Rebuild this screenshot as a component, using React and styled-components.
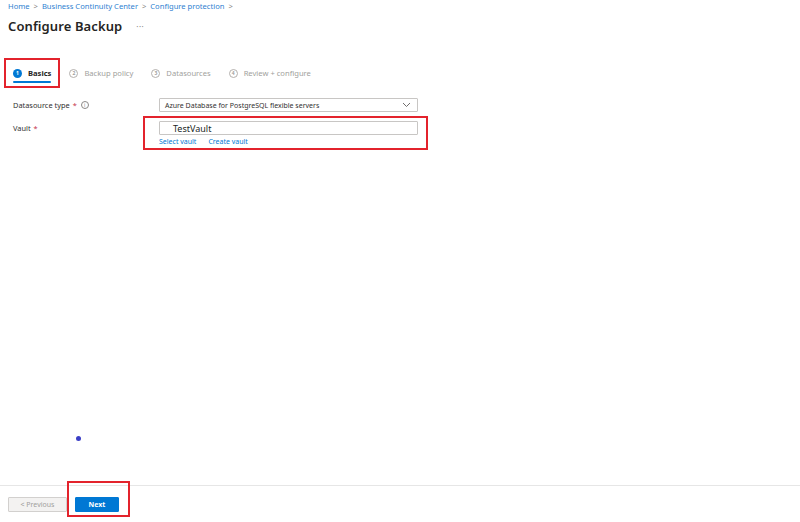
import React from "react";
import styled, { createGlobalStyle } from "styled-components";

const Global = createGlobalStyle`
  html, body { margin: 0; padding: 0; background: #ffffff; }
  body { font-family: "Noto Sans", "Open Sans", sans-serif; color: #323130; }
  * { box-sizing: border-box; }
`;

const Page = styled.div`
  width: 800px;
  height: 522px;
  display: flex;
  flex-direction: column;
  background: #fff;
`;

const Header = styled.header`
  padding: 1px 8px 0 8px;
  display: flex;
  flex-direction: column;
`;

const Breadcrumb = styled.nav`
  display: flex;
  align-items: center;
  gap: 4px;
  font-size: 7.6px;
  line-height: 11px;
  color: #2f7fd1;
`;

const Crumb = styled.span`
  color: #2f7fd1;
`;

const Sep = styled.span`
  color: #8a8886;
  font-size: 7.5px;
`;

const TitleRow = styled.div`
  display: flex;
  align-items: center;
  gap: 14px;
  margin-top: 2px;
  height: 24px;
`;

const Title = styled.h1`
  margin: 0;
  font-size: 13px;
  font-weight: 600;
  color: #252423;
  letter-spacing: 0.1px;
`;

const More = styled.span`
  font-size: 8px;
  color: #8a8886;
  letter-spacing: 0.5px;
`;

const Tabs = styled.div`
  display: flex;
  align-items: center;
  gap: 18px;
  padding: 0 0 0 13px;
  margin-top: 20px;
  height: 30px;
`;

const Tab = styled.div`
  position: relative;
  display: flex;
  align-items: center;
  gap: 6px;
  height: 30px;
  font-size: 7.6px;
  font-weight: ${(p) => (p.$active ? 700 : 400)};
  color: ${(p) => (p.$active ? "#252423" : "#a19f9d")};

  ${(p) =>
    p.$active &&
    `
    &::before {
      content: "";
      position: absolute;
      left: 0;
      right: 0;
      bottom: 5px;
      height: 2px;
      background: #0078d4;
      border-radius: 1px;
    }
    &::after {
      content: "";
      position: absolute;
      left: -9px;
      right: -9px;
      top: 0;
      bottom: 0;
      border: 2px solid #e3232c;
    }
  `}
`;

const StepNum = styled.span`
  width: 9px;
  height: 9px;
  border-radius: 50%;
  display: inline-flex;
  align-items: center;
  justify-content: center;
  font-size: 5px;
  font-weight: 700;
  background: ${(p) => (p.$active ? "#0078d4" : "transparent")};
  color: ${(p) => (p.$active ? "#fff" : "#a19f9d")};
  border: ${(p) => (p.$active ? "none" : "0.8px solid #b3b0ad")};
`;

const Form = styled.div`
  display: grid;
  grid-template-columns: 146px 259px;
  row-gap: 9px;
  padding-left: 13px;
  margin-top: 10px;
`;

const Label = styled.div`
  display: flex;
  align-items: center;
  gap: 3px;
  font-size: 7.4px;
  color: #323130;
  height: 14px;
`;

const Req = styled.span`
  color: #c4314b;
`;

const Info = styled.span`
  width: 8px;
  height: 8px;
  border-radius: 50%;
  border: 0.8px solid #8a8886;
  color: #8a8886;
  font-size: 5px;
  display: inline-flex;
  align-items: center;
  justify-content: center;
  margin-left: 1px;
`;

const Select = styled.div`
  height: 14px;
  border: 1px solid #c8c6c4;
  border-radius: 1px;
  display: flex;
  align-items: center;
  justify-content: space-between;
  padding: 0 6px 0 5px;
  font-size: 7px;
  color: #323130;
`;

const FieldGroup = styled.div`
  position: relative;
  display: flex;
  flex-direction: column;
  gap: 2px;

  &::after {
    content: "";
    position: absolute;
    left: -16px;
    right: -10px;
    top: -5px;
    bottom: -4px;
    border: 2px solid #e3232c;
  }
`;

const Input = styled.div`
  height: 14px;
  border: 1px solid #c8c6c4;
  border-radius: 1px;
  display: flex;
  align-items: center;
  padding-left: 13px;
  font-size: 9px;
  color: #201f1e;
`;

const Links = styled.div`
  display: flex;
  gap: 12px;
  font-size: 7px;
  line-height: 9px;
`;

const Link = styled.span`
  color: #0078d4;
`;

const Body = styled.div`
  flex: 1;
  position: relative;
`;

const Dot = styled.span`
  position: absolute;
  left: 76px;
  top: 290px;
  width: 5px;
  height: 5px;
  border-radius: 50%;
  background: #3b3fc6;
`;

const Footer = styled.footer`
  height: 37px;
  border-top: 1px solid #e6e6e6;
  display: flex;
  align-items: center;
  gap: 8px;
  padding: 0 8px;
  background: #fff;
`;

const Button = styled.div`
  position: relative;
  height: 15px;
  width: ${(p) => p.$w}px;
  display: flex;
  align-items: center;
  justify-content: center;
  font-size: 7px;
  border-radius: 1px;
  font-weight: ${(p) => (p.$primary ? 700 : 400)};
  background: ${(p) => (p.$primary ? "#0078d4" : "#f3f2f1")};
  color: ${(p) => (p.$primary ? "#ffffff" : "#a19f9d")};
  border: 1px solid ${(p) => (p.$primary ? "#0078d4" : "#d2d0ce")};
  margin-top: 1px;

  ${(p) =>
    p.$highlight &&
    `
    &::after {
      content: "";
      position: absolute;
      left: -9px;
      right: -12px;
      top: -17px;
      bottom: -6px;
      border: 2px solid #e3232c;
    }
  `}
`;

const Chevron = () => (
  <svg width="9" height="6" viewBox="0 0 9 6">
    <path d="M1 1 L4.5 4.5 L8 1" fill="none" stroke="#605e5c" strokeWidth="0.9" />
  </svg>
);

const steps = [
  { n: 1, label: "Basics", active: true },
  { n: 2, label: "Backup policy" },
  { n: 3, label: "Datasources" },
  { n: 4, label: "Review + configure" },
];

export default function App() {
  return (
    <>
      <Global />
      <Page>
        <Header>
          <Breadcrumb>
            <Crumb>Home</Crumb>
            <Sep>&gt;</Sep>
            <Crumb>Business Continuity Center</Crumb>
            <Sep>&gt;</Sep>
            <Crumb>Configure protection</Crumb>
            <Sep>&gt;</Sep>
          </Breadcrumb>
          <TitleRow>
            <Title>Configure Backup</Title>
            <More>···</More>
          </TitleRow>
        </Header>
        <Tabs>
          {steps.map((s) => (
            <Tab key={s.n} $active={s.active}>
              <StepNum $active={s.active}>{s.n}</StepNum>
              {s.label}
            </Tab>
          ))}
        </Tabs>
        <Form>
          <Label>
            Datasource type <Req>*</Req>
            <Info>i</Info>
          </Label>
          <Select>
            Azure Database for PostgreSQL flexible servers
            <Chevron />
          </Select>
          <Label>
            Vault <Req>*</Req>
          </Label>
          <FieldGroup>
            <Input>TestVault</Input>
            <Links>
              <Link>Select vault</Link>
              <Link>Create vault</Link>
            </Links>
          </FieldGroup>
        </Form>
        <Body>
          <Dot />
        </Body>
        <Footer>
          <Button $w={59}>&lt; Previous</Button>
          <Button $w={44} $primary $highlight>
            Next
          </Button>
        </Footer>
      </Page>
    </>
  );
}
